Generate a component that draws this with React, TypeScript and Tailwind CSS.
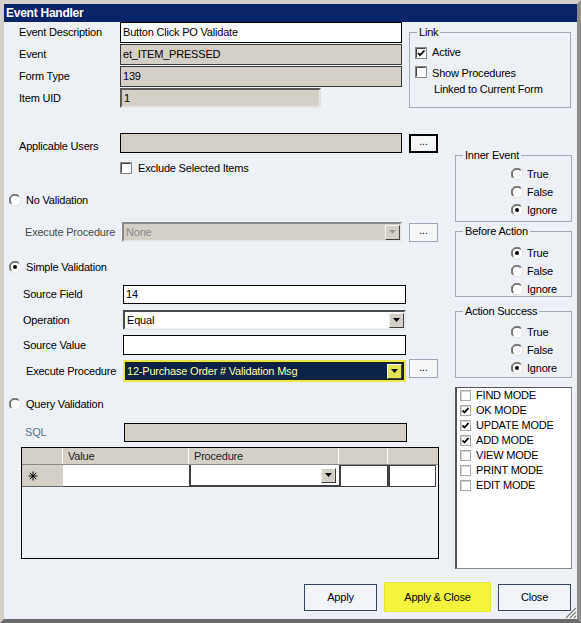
import React from 'react';

type Tone = 'gray' | 'yellow' | 'off';

// classic sunken radio button
const Radio = ({ on = false }: { on?: boolean }) => (
  <svg width="12" height="12" viewBox="0 0 12 12" className="shrink-0">
    <circle cx="6" cy="6" r="5.5" fill="#fff" />
    <path d="M10.2 1.8A5.94 5.94 0 0 0 1.8 10.2" fill="none" stroke="#808080" />
    <path d="M9.5 2.5A4.95 4.95 0 0 0 2.5 9.5" fill="none" stroke="#404040" />
    <path d="M1.8 10.2A5.94 5.94 0 0 0 10.2 1.8" fill="none" stroke="#e2e2e2" />
    {on && <circle cx="6" cy="6" r="2" fill="#000" />}
  </svg>
);

const Check = ({ on = false, small = false }: { on?: boolean; small?: boolean }) => {
  const s = small ? 11 : 12;
  return (
    <svg width={s} height={s} viewBox={`0 0 ${s} ${s}`} className="shrink-0">
      <rect x="0.5" y="0.5" width={s - 1} height={s - 1} fill="#fff" stroke={small ? '#a8a8a8' : '#8a8a8a'} />
      <path d={`M1.5 ${s - 1.5}V1.5H${s - 1.5}`} fill="none" stroke={small ? '#d0d0d0' : '#404040'} />
      {on && (
        <path
          d={small ? 'M2.5 5.5l2 2 4-4.5' : 'M3 6l2 2.2 4.5-4.7'}
          fill="none"
          stroke="#000"
          strokeWidth="1.8"
        />
      )}
    </svg>
  );
};

const Arrow = ({ tone = 'gray' }: { tone?: Tone }) => (
  <div
    className={`flex h-[15px] w-[15px] shrink-0 items-center justify-center border border-t-[#f4f4f4] border-l-[#f4f4f4] border-r-[#404040] border-b-[#404040] ${
      tone === 'yellow' ? 'bg-[#e2e256]' : 'bg-[#d4d0c8]'
    }`}
  >
    <svg width="7" height="4" viewBox="0 0 7 4">
      <path d="M0 0h7L3.5 4z" fill={tone === 'off' ? '#9a9a9a' : '#000'} />
    </svg>
  </div>
);

const Dots = ({ strong = false, className = '' }: { strong?: boolean; className?: string }) => (
  <div
    className={`flex h-[19px] w-[29px] shrink-0 items-center justify-center bg-[#f4f6f8] pb-[2px] text-[10px] leading-none tracking-normal ${
      strong ? 'border-2 border-black' : 'border border-[#9aa8b8]'
    } ${className}`}
  >
    ...
  </div>
);

const Group = ({ title, className = '', children }: { title: string; className?: string; children: React.ReactNode }) => (
  <div className={`relative shrink-0 border border-[#a3abb3] ${className}`}>
    <span className="absolute left-[7px] top-[-7px] bg-[#edf1f5] px-[2px] leading-[13px]">{title}</span>
    {children}
  </div>
);

const RadioSet = ({ pick, className }: { pick: string; className: string }) => (
  <div className={`flex flex-col pl-[55px] ${className}`}>
    {['True', 'False', 'Ignore'].map((o) => (
      <div key={o} className="flex h-[18px] items-center gap-[4px]">
        <Radio on={o === pick} />
        {o}
      </div>
    ))}
  </div>
);

const Star = () => (
  <svg width="10" height="10" viewBox="0 0 10 10">
    <path d="M5 0.5v9M0.5 5h9M1.8 1.8l6.4 6.4M8.2 1.8l-6.4 6.4" stroke="#000" strokeWidth="1" />
  </svg>
);

const modes = [
  { name: 'FIND MODE', on: false },
  { name: 'OK MODE', on: true },
  { name: 'UPDATE MODE', on: true },
  { name: 'ADD MODE', on: true },
  { name: 'VIEW MODE', on: false },
  { name: 'PRINT MODE', on: false },
  { name: 'EDIT MODE', on: false },
];

export default function App() {
  return (
    <div className="relative flex h-[623px] w-[581px] flex-col border-4 border-[#d4d0c8] border-r-[#8c8c8c] border-b-[#6a6a6a] bg-[#edf1f5] font-['Liberation_Sans',Arial,sans-serif] text-[11px] tracking-[-0.2px] text-black">
      <div className="flex h-[18px] shrink-0 items-center bg-[#0a246a] pl-[2px] text-[12px] font-bold tracking-[-0.25px] text-white">
        Event Handler
      </div>

      {/* header fields + link box */}
      <div className="flex h-[86px] shrink-0">
        <div className="flex flex-col pl-[15px]">
          <div className="flex h-[22px]">
            <span className="flex h-[21px] w-[101px] items-center">Event Description</span>
            <div className="flex h-[21px] w-[282px] items-center border border-black bg-white pl-[2px]">
              Button Click PO Validate
            </div>
          </div>
          <div className="flex h-[22px]">
            <span className="flex h-[21px] w-[101px] items-center">Event</span>
            <div className="flex h-[21px] w-[282px] items-center border border-[#3a3a3a] bg-[#d4d0c8] pl-[2px]">
              et_ITEM_PRESSED
            </div>
          </div>
          <div className="flex h-[22px]">
            <span className="flex h-[21px] w-[101px] items-center">Form Type</span>
            <div className="flex h-[21px] w-[282px] items-center border border-[#3a3a3a] bg-[#d4d0c8] pl-[2px]">
              139
            </div>
          </div>
          <div className="flex h-[20px]">
            <span className="flex h-[20px] w-[101px] items-center">Item UID</span>
            <div className="flex h-[20px] w-[201px] items-center border-2 border-[#5a5a5a] border-r-[#e4e4e4] border-b-[#e4e4e4] bg-[#d4d0c8] pl-[2px]">
              1
            </div>
          </div>
        </div>

        <Group title="Link" className="ml-[7px] mt-[10px] h-[76px] w-[162px]">
          <div className="flex flex-col pl-[5px] pt-[13px]">
            <div className="flex h-[13px] items-center gap-[5px]">
              <Check on />
              Active
            </div>
            <div className="mt-[6px] flex items-start gap-[5px]">
              <div className="mt-[1px]">
                <Check />
              </div>
              <div className="leading-[16px]">
                <div>Show Procedures</div>
                <div className="pl-[2px]">Linked to Current Form</div>
              </div>
            </div>
          </div>
        </Group>
      </div>

      <div className="flex h-[461px] shrink-0">
        {/* validation settings */}
        <div className="flex w-[434px] shrink-0 flex-col">
          <div className="ml-[15px] mt-[25px] flex h-[20px] items-center">
            <span className="mt-[7px] w-[101px]">Applicable Users</span>
            <div className="h-[20px] w-[282px] border border-black bg-[#d4d0c8]" />
            <Dots strong className="ml-[7px]" />
          </div>

          <div className="ml-[116px] mt-[9px] flex h-[12px] items-center gap-[6px]">
            <Check />
            Exclude Selected Items
          </div>

          <div className="ml-[5px] mt-[20px] flex h-[12px] items-center gap-[5px]">
            <Radio />
            No Validation
          </div>

          <div className="ml-[21px] mt-[16px] flex h-[20px] items-center">
            <span className="w-[97px] text-[#4a4a4a]">Execute Procedure</span>
            <div className="flex h-[20px] w-[280px] items-center justify-between border-2 border-[#8a8a8a] border-r-[#e6e6e6] border-b-[#e6e6e6] bg-[#d4d0c8] pl-[2px] text-[#8a8a8a]">
              None
              <Arrow tone="off" />
            </div>
            <Dots className="ml-[7px]" />
          </div>

          <div className="ml-[5px] mt-[19px] flex h-[12px] items-center gap-[5px]">
            <Radio on />
            Simple Validation
          </div>

          <div className="ml-[19px] mt-[12px] flex h-[19px] items-center">
            <span className="w-[100px]">Source Field</span>
            <div className="flex h-[19px] w-[283px] items-center border border-black bg-white pl-[2px]">14</div>
          </div>

          <div className="ml-[19px] mt-[6px] flex h-[20px] items-center">
            <span className="w-[100px]">Operation</span>
            <div className="flex h-[20px] w-[283px] items-center justify-between border-2 border-[#4a4a4a] border-r-[#e8e8e8] border-b-[#e8e8e8] bg-white pl-[2px]">
              Equal
              <Arrow />
            </div>
          </div>

          <div className="ml-[19px] mt-[5px] flex h-[20px] items-center">
            <span className="w-[100px]">Source Value</span>
            <div className="h-[20px] w-[283px] border border-black bg-white" />
          </div>

          <div className="ml-[22px] mt-[5px] flex h-[22px] items-start">
            <span className="flex h-[22px] w-[97px] items-center">Execute Procedure</span>
            <div className="h-[22px] w-[283px] border-2 border-[#e6e64e]">
              <div className="flex h-full items-center justify-between border border-[#23230c] bg-[#0c2248] pl-[1px] pr-[1px] text-[#ffffa8]">
                12-Purchase Order # Validation Msg
                <Arrow tone="yellow" />
              </div>
            </div>
            <Dots className="-mt-[1px] ml-[3px]" />
          </div>

          <div className="ml-[5px] mt-[16px] flex h-[12px] items-center gap-[5px]">
            <Radio />
            Query Validation
          </div>

          <div className="ml-[21px] mt-[13px] flex h-[19px] items-center">
            <span className="w-[99px] text-[#587089]">SQL</span>
            <div className="h-[19px] w-[283px] border border-black bg-[#d4d0c8]" />
          </div>

          {/* value / procedure grid */}
          <div className="ml-[17px] mt-[5px] flex h-[112px] w-[418px] flex-col border border-black">
            <div className="flex h-[17px] border-b border-[#8a8a8a] bg-[#d4d0c8] text-[#222]">
              <div className="w-[41px] border-r border-white" />
              <div className="flex w-[126px] items-center border-r border-white pl-[5px]">Value</div>
              <div className="flex w-[150px] items-center border-r border-white pl-[5px]">Procedure</div>
              <div className="w-[49px] border-r border-white" />
              <div className="w-[48px]" />
            </div>
            <div className="flex h-[22px]">
              <div className="flex w-[41px] items-center border-b border-[#6a6a6a] bg-[#d4d0c8] pl-[6px]">
                <Star />
              </div>
              <div className="w-[126px] border-b border-[#404040] bg-white" />
              <div className="flex w-[150px] items-center justify-end border-l-2 border-b-2 border-[#404040] bg-white pr-[3px]">
                <Arrow />
              </div>
              <div className="w-[49px] border border-l-2 border-[#404040] bg-white" />
              <div className="w-[48px] border border-l-2 border-[#404040] bg-white" />
            </div>
          </div>
        </div>

        {/* event flags + form modes */}
        <div className="ml-[17px] flex w-[117px] shrink-0 flex-col">
          <Group title="Inner Event" className="mt-[47px] h-[67px]">
            <RadioSet pick="Ignore" className="pt-[9px]" />
          </Group>
          <Group title="Before Action" className="mt-[9px] h-[66px]">
            <RadioSet pick="True" className="pt-[12px]" />
          </Group>
          <Group title="Action Success" className="mt-[14px] h-[67px]">
            <RadioSet pick="Ignore" className="pt-[11px]" />
          </Group>
          <div className="mt-[9px] h-[182px] border border-l-2 border-[#555] border-r-[#8a8a8a] border-b-[#8a8a8a] bg-white pl-[3px]">
            {modes.map((m) => (
              <div key={m.name} className="flex h-[15px] items-center gap-[5px]">
                <Check small on={m.on} />
                {m.name}
              </div>
            ))}
          </div>
        </div>
      </div>

      <div className="mt-[13px] flex h-[30px] shrink-0 items-center justify-end gap-[7px] pr-[6px]">
        <button className="flex h-[27px] w-[73px] items-center justify-center border border-[#34465a] bg-[#f2f5f8]">
          Apply
        </button>
        <button className="flex h-[30px] w-[107px] items-center justify-center border border-[#e6e63a] bg-[#f4f43c]">
          Apply &amp; Close
        </button>
        <button className="flex h-[27px] w-[73px] items-center justify-center border border-[#34465a] bg-[#f2f5f8]">
          Close
        </button>
      </div>

      {/* size grip */}
      <svg width="12" height="12" viewBox="0 0 12 12" className="absolute bottom-0 right-0">
        <path d="M11 1L1 11M11 5L5 11M11 9L9 11" stroke="#808080" strokeWidth="1.2" />
        <path d="M12 2L2 12M12 6L6 12" stroke="#ffffff" strokeWidth="0.8" />
      </svg>
    </div>
  );
}
